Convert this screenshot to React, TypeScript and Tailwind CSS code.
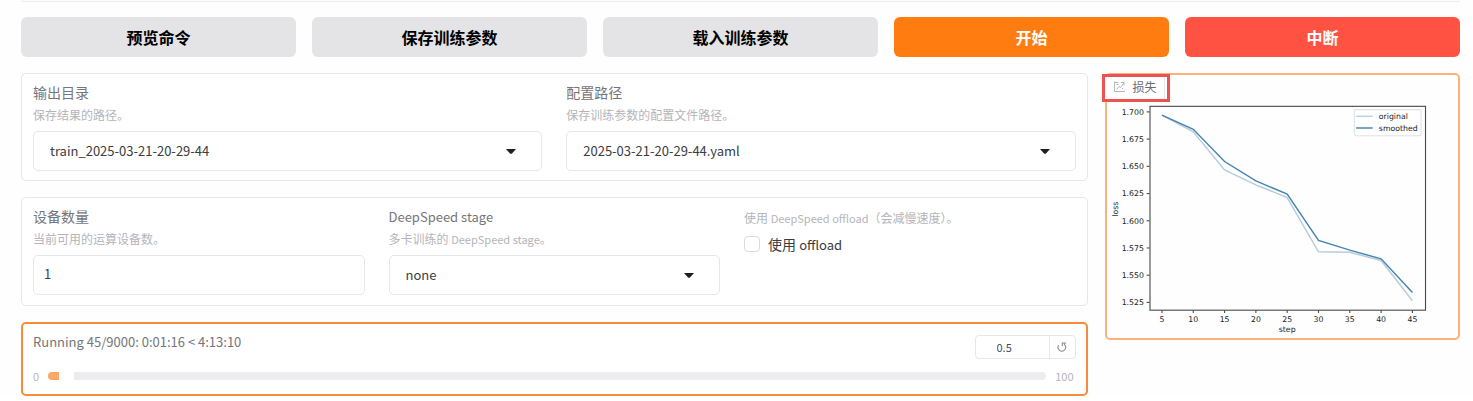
import { useState } from "react";
import type { ReactNode } from "react";

const actions = [
  { label: "预览命令", className: "bg-[#e4e3e6] text-black" },
  { label: "保存训练参数", className: "bg-[#e4e3e6] text-black" },
  { label: "载入训练参数", className: "bg-[#e4e3e6] text-black" },
  { label: "开始", className: "bg-[#ff7c11] text-white" },
  { label: "中断", className: "bg-[#ff5243] text-white" },
];

const steps = [5, 10, 15, 20, 25, 30, 35, 40, 45];
const original = [1.697, 1.6816, 1.6467, 1.633, 1.6213, 1.5715, 1.571, 1.5635, 1.5265];
const smoothed = [1.697, 1.684, 1.6544, 1.6366, 1.6244, 1.582, 1.573, 1.565, 1.534];
const lossTicks = [1.7, 1.675, 1.65, 1.625, 1.6, 1.575, 1.55, 1.525];

const sx = (step: number) => 80 + ((step - 3) / 44) * 496;
const sy = (loss: number) => 70 + (1.7 - loss) * 1960;
const toPoints = (values: number[]) => values.map((v, i) => `${sx(steps[i])},${sy(v)}`).join(" ");

function LossChart() {
  return (
    <svg
      viewBox="0 0 640 480"
      className="block w-full"
      fontFamily="DejaVu Sans, sans-serif"
      fontSize="14"
      fill="#222"
      role="img"
      aria-label="loss"
    >
      <polyline points={toPoints(original)} fill="none" stroke="#b7cbdc" strokeWidth="2.6" />
      <polyline points={toPoints(smoothed)} fill="none" stroke="#4684b0" strokeWidth="2.6" />
      <rect x="81" y="60" width="496" height="367" fill="none" stroke="#4a4a4e" strokeWidth="2" />

      {lossTicks.map((t) => (
        <g key={t}>
          <line x1="75" x2="80" y1={sy(t)} y2={sy(t)} stroke="#4a4a4e" strokeWidth="2" />
          <text x="70" y={sy(t) + 5} textAnchor="end">{t.toFixed(3)}</text>
        </g>
      ))}
      {steps.map((s) => (
        <g key={s}>
          <line x1={sx(s)} x2={sx(s)} y1="427" y2="432" stroke="#4a4a4e" strokeWidth="2" />
          <text x={sx(s)} y="448" textAnchor="middle">{s}</text>
        </g>
      ))}
      <text x="328" y="467" textAnchor="middle">step</text>
      <text transform="translate(24 245) rotate(-90)" textAnchor="middle">loss</text>

      {/* Legend */}
      <rect x="449" y="66" width="120" height="47" rx="3" fill="#fff" stroke="#e2e2e6" strokeWidth="2" />
      <line x1="452" x2="482" y1="78" y2="78" stroke="#b5d3dc" strokeWidth="2.6" />
      <line x1="452" x2="482" y1="99" y2="99" stroke="#4684b0" strokeWidth="2.6" />
      <text x="493" y="83">original</text>
      <text x="493" y="104">smoothed</text>
    </svg>
  );
}

function Panel({ children, className }: { children: ReactNode; className: string }) {
  return <div className={`rounded-[5px] border border-[#e6e6e8] bg-white px-[11px] pt-[9px] ${className}`}>{children}</div>;
}

function Field({ id, label, info, children }: { id: string; label: ReactNode; info: ReactNode; children: ReactNode }) {
  return (
    <div className="flex min-w-0 flex-col">
      <label htmlFor={id} className="h-5 text-sm leading-[18px] text-[#75757a]">{label}</label>
      <p className="mt-1 mb-2 h-4 text-xs leading-4 text-[#b4b4b9]">{info}</p>
      {children}
    </div>
  );
}

function Dropdown({ id, value }: { id: string; value: string }) {
  return (
    <div className="relative">
      <select
        id={id}
        defaultValue={value}
        className="h-10 w-full appearance-none rounded-[5px] border border-[#e6e6e8] bg-white px-4 text-[13px] text-[#3b3b40]"
      >
        <option>{value}</option>
      </select>
      <svg viewBox="0 0 10 5" className="pointer-events-none absolute top-[18px] right-[26px] h-[5px] w-[10px]" aria-hidden="true">
        <path d="M0 0h10L6 4.5Q5 5.2 4 4.5Z" fill="#1f1f22" />
      </svg>
    </div>
  );
}

export default function App() {
  const [progress, setProgress] = useState("0.5");

  return (
    <main
      className="bg-[#fefefe] pr-[13px] pl-[21px]"
      style={{ fontFamily: '"Noto Sans CJK SC", sans-serif' }}
    >
      <div className="h-[2px] rounded-b-[5px] border border-t-0 border-[#ebebed]" />

      <div className="mt-[15px] grid grid-cols-5 gap-4">
        {actions.map((a) => (
          <button key={a.label} type="button" className={`h-10 rounded-md text-base font-bold ${a.className}`}>
            {a.label}
          </button>
        ))}
      </div>

      <div className="mt-4 grid grid-cols-[3fr_1fr] items-start gap-[17px]">
        <div className="flex min-w-0 flex-col gap-4">
          <Panel className="grid grid-cols-2 gap-6 pb-[9px]">
            <Field id="output-dir" label="输出目录" info="保存结果的路径。">
              <Dropdown id="output-dir" value="train_2025-03-21-20-29-44" />
            </Field>
            <Field id="config-path" label="配置路径" info="保存训练参数的配置文件路径。">
              <Dropdown id="config-path" value="2025-03-21-20-29-44.yaml" />
            </Field>
          </Panel>

          <Panel className="grid grid-cols-3 gap-6 pb-[10px]">
            <Field id="device-count" label="设备数量" info="当前可用的运算设备数。">
              <input
                id="device-count"
                defaultValue="1"
                className="h-10 w-full rounded-[5px] border border-[#e6e6e8] bg-white px-[10px] pb-1 text-[13px] text-[#3b3b40]"
              />
            </Field>
            <Field
              id="ds-stage"
              label={<span className="text-[13px]">DeepSpeed stage</span>}
              info={<>多卡训练的 <span className="text-[11px]">DeepSpeed stage</span>。</>}
            >
              <Dropdown id="ds-stage" value="none" />
            </Field>
            <div>
              <p className="h-[22px] text-xs leading-[22px] text-[#b4b4b9]">
                使用 <span className="text-[11px]">DeepSpeed offload</span>（会减慢速度）。
              </p>
              <label className="mt-1 flex h-[22px] items-center gap-2 text-sm leading-[22px] text-[#3b3b40]">
                <input type="checkbox" className="size-4 appearance-none rounded-[4px] border border-[#d9d9dd] bg-white" />
                <span>使用 <span className="text-[13px]">offload</span></span>
              </label>
            </div>
          </Panel>

          {/* Training progress */}
          <div className="rounded-[5px] border-2 border-[#f88a3c] bg-white px-[10px] pt-2 pb-[9px]">
            <div className="flex h-[27px] justify-between">
              <label htmlFor="progress" className="text-[13px] leading-5 text-[#75757a]">
                Running 45/9000: 0:01:16 &lt; 4:13:10
              </label>
              <div className="flex h-6 self-end rounded-[4px] border border-[#e6e6e8]">
                <input
                  aria-label="progress value"
                  value={progress}
                  onChange={(e) => setProgress(e.target.value)}
                  className="w-[73px] px-2 pl-[21px] text-[11px] text-[#4b4b50]"
                />
                <button
                  type="button"
                  aria-label="reset"
                  onClick={() => setProgress("0.5")}
                  className="flex w-[26px] items-center justify-center border-l border-[#e6e6e8]"
                >
                  <svg viewBox="0 0 12 12" className="size-3" fill="none" stroke="#8b8b91" strokeWidth="1.1" aria-hidden="true">
                    <path d="M2.6 4.2A3.8 3.8 0 1 0 9 4.2L8 2.6M5.8 2h4.4M6.3 2v3.2" />
                  </svg>
                </button>
              </div>
            </div>
            <div className="mt-2 flex h-[18px] items-center gap-[9px] text-[11px] text-[#b4b4b9]">
              <span>0</span>
              <input
                id="progress"
                type="range"
                min="0"
                max="100"
                step="0.1"
                value={progress}
                onChange={(e) => setProgress(e.target.value)}
                className="h-2 min-w-0 flex-1 appearance-none rounded-full bg-[linear-gradient(to_right,#fda766_11px,#ffffff_11px,#ffffff_26px,#ededef_26px)] [&::-webkit-slider-thumb]:size-4 [&::-webkit-slider-thumb]:appearance-none [&::-webkit-slider-thumb]:bg-transparent"
              />
              <span className="pr-[2px]">100</span>
            </div>
          </div>
        </div>

        {/* Loss plot */}
        <div className="relative min-w-0 rounded-[5px] inset-ring-2 inset-ring-[#fcb17a]">
          <LossChart />
          <div className="absolute top-px -left-[3px] flex h-7 w-[68px] items-center border-3 border-[#ed5250] bg-white">
            <div className="flex h-full w-[60px] items-center gap-2 border-r border-[#e6e6e8] pb-[3px] pl-[9px] text-xs text-[#6b6b70]">
              <svg viewBox="0 0 11 11" className="size-[11px] shrink-0" fill="none" stroke="#b4b4ba" aria-hidden="true">
                <path d="M.5 .5v10H11" />
                <path d="M2.5 8.5 5 5.5l1.5 1L9.5 2.5M7 1.5h3v3" />
                <path d="M.5 1.5h4M2.5 3.5h2M8 7.5h1" />
              </svg>
              <span className="whitespace-nowrap">损失</span>
            </div>
          </div>
        </div>
      </div>
    </main>
  );
}
